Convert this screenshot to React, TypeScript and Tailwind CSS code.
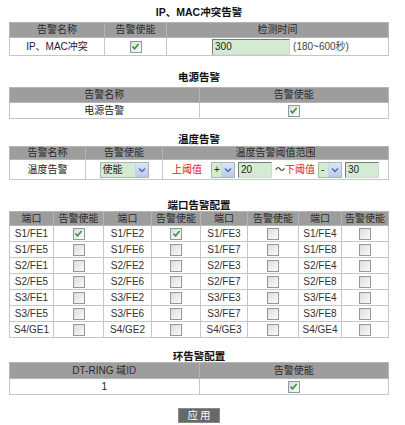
import React from 'react';

const font = { fontFamily: '"Liberation Sans", "Noto Sans CJK SC", sans-serif' };

function Check({ checked }: { checked?: boolean }) {
  return (
    <span className="inline-flex items-center justify-center w-[12px] h-[12px] border border-[#8d9aa6] bg-gradient-to-br from-[#dcdcdc] to-[#fbfbfb] align-middle">
      {checked && (
        <svg width="9" height="9" viewBox="0 0 9 9">
          <path d="M1.5 4.6 L3.6 6.7 L7.6 2" fill="none" stroke="#2f9a2f" strokeWidth="1.6" />
        </svg>
      )}
    </span>
  );
}

function TextBox({ value, w }: { value: string; w: string }) {
  return (
    <span
      className={`inline-block ${w} h-[16px] leading-[14px] px-[2px] text-left bg-[#d3ebd3] border border-t-[#7a7a7a] border-l-[#7a7a7a] border-b-[#d6d6d6] border-r-[#d6d6d6] text-[#222] align-middle`}
    >
      {value}
    </span>
  );
}

function Select({ value, w }: { value: string; w: string }) {
  return (
    <span className={`inline-flex ${w} h-[16px] items-stretch bg-[#d3ebd3] border border-[#a9b8a9] align-middle`}>
      <span className="flex-1 text-left pl-[2px] leading-[14px] text-[#222]">{value}</span>
      <span className="w-[13px] flex items-center justify-center bg-gradient-to-b from-[#dbe5f5] to-[#b9cbeb] border-l border-[#c9d4e6]">
        <svg width="8" height="6" viewBox="0 0 8 6">
          <path d="M1 1.5 L4 4.5 L7 1.5" fill="none" stroke="#4b6fb4" strokeWidth="1.5" />
        </svg>
      </span>
    </span>
  );
}

function Title({ text, className }: { text: string; className: string }) {
  return <div className={`text-center font-bold text-[10.5px] text-[#111] ${className}`}>{text}</div>;
}

const tbl = 'w-full table-fixed border-collapse border border-[#a3a3a3] leading-[12px]';
const th = 'bg-[#9d9d9d] border border-[#b5b5b5] text-[#2a2a2a] font-normal text-center p-0 leading-[12px]';
const td = 'border border-[#c6c6c6] text-[#222] text-center p-0 leading-[12px]';

const ports = [
  ['S1/FE1', 'S1/FE2', 'S1/FE3', 'S1/FE4'],
  ['S1/FE5', 'S1/FE6', 'S1/FE7', 'S1/FE8'],
  ['S2/FE1', 'S2/FE2', 'S2/FE3', 'S2/FE4'],
  ['S2/FE5', 'S2/FE6', 'S2/FE7', 'S2/FE8'],
  ['S3/FE1', 'S3/FE2', 'S3/FE3', 'S3/FE4'],
  ['S3/FE5', 'S3/FE6', 'S3/FE7', 'S3/FE8'],
  ['S4/GE1', 'S4/GE2', 'S4/GE3', 'S4/GE4'],
];

export default function App() {
  return (
    <div className="w-[405px] h-[425px] bg-white text-[10px] overflow-hidden" style={font}>
      <div className="w-[380px] ml-[9px]">
        {/* IP/MAC conflict */}
        <Title text="IP、MAC冲突告警" className="mt-[6px] h-[12px] leading-[12px] mb-[4px]" />
        <table className={tbl}>
          <colgroup>
            <col className="w-[95px]" />
            <col className="w-[62px]" />
            <col />
          </colgroup>
          <thead>
            <tr className="h-[15px]">
              <th className={th}>告警名称</th>
              <th className={th}>告警使能</th>
              <th className={th}>检测时间</th>
            </tr>
          </thead>
          <tbody>
            <tr className="h-[18px]">
              <td className={`${td} text-[#3b2f5c]`}>IP、MAC冲突</td>
              <td className={td}><Check checked /></td>
              <td className={`${td} pl-[6px] whitespace-nowrap`}>
                <TextBox value="300" w="w-[78px]" />
                <span className="ml-[3px] text-[#444] align-middle">(180~600秒)</span>
              </td>
            </tr>
          </tbody>
        </table>

        {/* Power */}
        <Title text="电源告警" className="mt-[15px] h-[12px] leading-[12px] mb-[4px]" />
        <table className={tbl}>
          <thead>
            <tr className="h-[15px]">
              <th className={th}>告警名称</th>
              <th className={th}>告警使能</th>
            </tr>
          </thead>
          <tbody>
            <tr className="h-[16px]">
              <td className={td}>电源告警</td>
              <td className={td}><Check checked /></td>
            </tr>
          </tbody>
        </table>

        {/* Temperature */}
        <Title text="温度告警" className="mt-[14px] h-[12px] leading-[12px] mb-[1px]" />
        <table className={tbl}>
          <colgroup>
            <col className="w-[76px]" />
            <col className="w-[77px]" />
            <col />
          </colgroup>
          <thead>
            <tr className="h-[13px]">
              <th className={th}>告警名称</th>
              <th className={th}>告警使能</th>
              <th className={th}>温度告警阈值范围</th>
            </tr>
          </thead>
          <tbody>
            <tr className="h-[20px]">
              <td className={td}>温度告警</td>
              <td className={td}><Select value="使能" w="w-[49px]" /></td>
              <td className={`${td} whitespace-nowrap`}>
                <span className="text-[#e32222] align-middle">上阈值</span>
                <span className="ml-[9px]"><Select value="+" w="w-[24px]" /></span>
                <span className="ml-[3px]"><TextBox value="20" w="w-[34px]" /></span>
                <span className="ml-[3px] align-middle text-[#222]">～</span>
                <span className="text-[#e32222] align-middle">下阈值</span>
                <span className="ml-[3px]"><Select value="-" w="w-[24px]" /></span>
                <span className="ml-[3px]"><TextBox value="30" w="w-[34px]" /></span>
              </td>
            </tr>
          </tbody>
        </table>

        {/* Port alarms */}
        <Title text="端口告警配置" className="mt-[19px] h-[12px] leading-[12px]" />
        <table className={tbl}>
          <colgroup>
            <col className="w-[44px]" />
            <col className="w-[50px]" />
            <col className="w-[48px]" />
            <col className="w-[49px]" />
            <col className="w-[47px]" />
            <col className="w-[51px]" />
            <col className="w-[43px]" />
            <col />
          </colgroup>
          <thead>
            <tr className="h-[14px]">
              {[0, 1, 2, 3].map((i) => (
                <React.Fragment key={i}>
                  <th className={th}>端口</th>
                  <th className={th}>告警使能</th>
                </React.Fragment>
              ))}
            </tr>
          </thead>
          <tbody>
            {ports.map((row, r) => (
              <tr key={r} className="h-[16px]">
                {row.map((p, c) => (
                  <React.Fragment key={p}>
                    <td className={`${td} text-[#333]`}>{p}</td>
                    <td className={td}><Check checked={r === 0 && c < 2} /></td>
                  </React.Fragment>
                ))}
              </tr>
            ))}
          </tbody>
        </table>

        {/* Ring alarms */}
        <Title text="环告警配置" className="mt-[13px] h-[10px] leading-[10px] mb-[1px]" />
        <table className={tbl}>
          <thead>
            <tr className="h-[16px]">
              <th className={th}>DT-RING 域<span className="text-[#3b2f5c]">ID</span></th>
              <th className={th}>告警使能</th>
            </tr>
          </thead>
          <tbody>
            <tr className="h-[16px]">
              <td className={`${td} text-[#3b2f5c]`}>1</td>
              <td className={td}><Check checked /></td>
            </tr>
          </tbody>
        </table>

        <div className="flex justify-center mt-[13px]">
          <button className="w-[42px] h-[15px] leading-[13px] bg-[#686868] border border-[#8a8a8a] text-white text-[10.5px] tracking-[2px] pl-[2px]">
            应用
          </button>
        </div>
      </div>
    </div>
  );
}
